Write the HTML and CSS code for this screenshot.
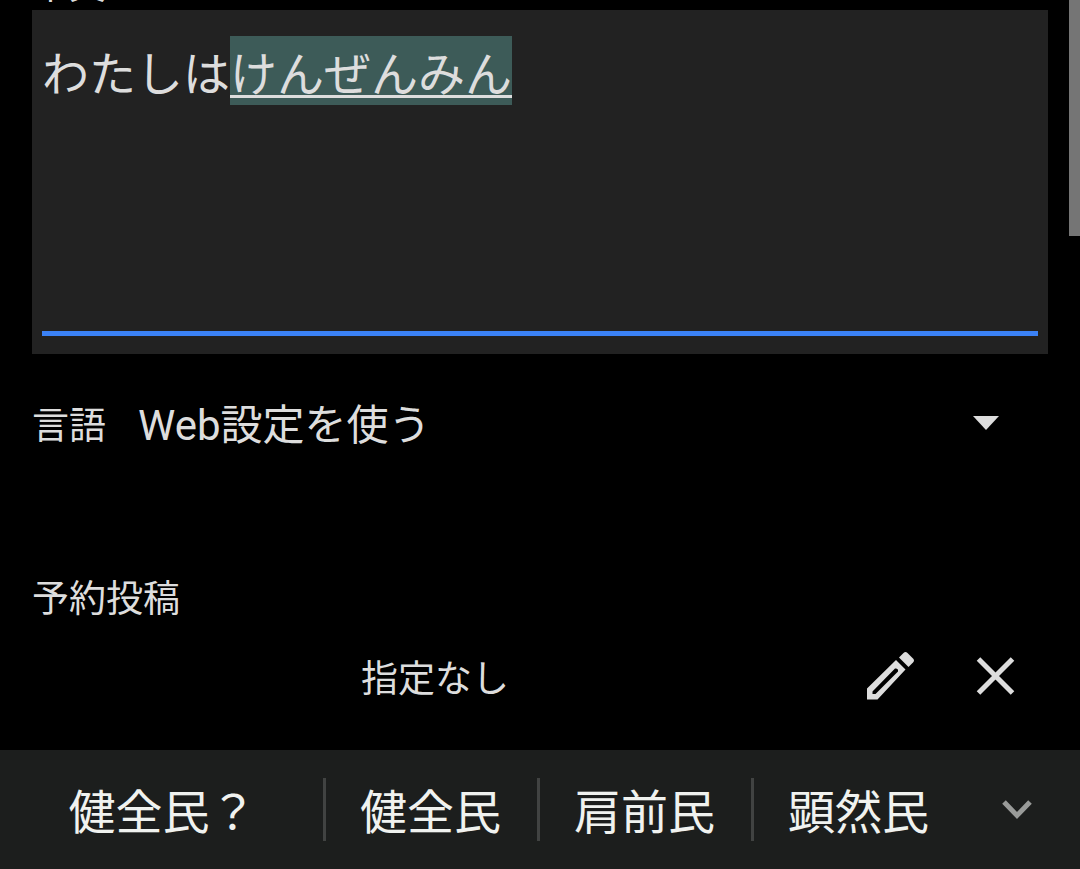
FILE: index.html
```html
<!DOCTYPE html>
<html lang="ja">
<head>
<meta charset="UTF-8">
<meta name="viewport" content="width=device-width, initial-scale=1.0">
<title>投稿</title>
<link rel="stylesheet" href="styles.css">
</head>
<body>
<form class="post-form">
    <label class="field-label" for="content">本文</label>
    <div class="content-box">
        <textarea id="content" class="content-input" name="content" spellcheck="false">わたしはけんぜんみん</textarea>
    </div>

    <div class="language-row">
        <label class="field-label" for="language">言語</label>
        <select id="language" class="language-select" name="language">
            <option>Web設定を使う</option>
        </select>
        <svg class="select-arrow" viewBox="0 0 26 14" aria-hidden="true"><path d="M0 0h26L13 14z"/></svg>
    </div>

    <section class="schedule">
        <h2 class="field-label">予約投稿</h2>
        <div class="schedule-row">
            <span class="schedule-value">指定なし</span>
            <button type="button" class="icon-button" aria-label="編集">
                <svg class="icon" viewBox="0 0 48 48"><path fill-rule="evenodd" d="M0 36.500 29 8 38.500 17.500 10.500 47.500H0zM5.500 39.500v2.500h3L31 19.500Q31.500 16 28 16.500z"/><path d="M32 5.500 36.500 1Q38.500-1 40.500 1L46 6.500Q48 8.500 46 10.500L41.500 15z"/></svg>
            </button>
            <button type="button" class="icon-button" aria-label="削除">
                <svg class="icon icon-close" viewBox="0 0 48 48"><path d="M6.500 7 40.500 41M40.500 7 6.500 41"/></svg>
            </button>
        </div>
    </section>
</form>

<div class="scroll-thumb"></div>

<div class="candidates">
    <button type="button" class="candidate candidate-first">健全民？</button>
    <button type="button" class="candidate">健全民</button>
    <button type="button" class="candidate">肩前民</button>
    <button type="button" class="candidate candidate-last">顕然民</button>
    <button type="button" class="candidate-more" aria-label="もっと見る">
        <svg class="chevron" viewBox="0 0 30 20"><path d="M2 2 15 15.500 28 2"/></svg>
    </button>
</div>

<script>
    // select the part that is still being converted
    const content = document.getElementById("content");
    content.focus();
    content.setSelectionRange(4, 10);
</script>
</body>
</html>
```
FILE: styles.css
```css
* {
    box-sizing: border-box;
}
body {
    display: flex;
    flex-direction: column;
    height: 100vh;
    margin: 0;
    overflow: hidden;
    background-color: #000;
    color: #ddd;
    font-family: "Noto Sans CJK JP", sans-serif;
}
button, select, textarea {
    margin: 0;
    padding: 0;
    border: none;
    border-radius: 0;
    outline: none;
    background: none;
    color: inherit;
    font-family: inherit;
}
.post-form {
    flex: 1;
    margin-top: -44px; /* scrolled down past the first label */
    padding: 0 32px;
}
.field-label {
    display: block;
    margin: 0;
    font-size: 37px;
    font-weight: normal;
    line-height: 54px;
}
.content-box {
    padding: 26px 10px 18px;
    background-color: #222;
}
.content-input {
    display: block;
    width: 100%;
    height: 300px;
    border-bottom: 5px solid #3b82f6;
    font-size: 47px;
    line-height: 69px;
    resize: none;
    caret-color: transparent;
}
.content-input::selection {
    background-color: rgba(62, 92, 89, 0.99);
    color: #ddd;
    text-decoration: underline 3px;
    text-underline-offset: 4px;
}

/* Language */
.language-row {
    position: relative;
    display: flex;
    align-items: center;
    gap: 32px;
    height: 138px;
}
.language-select {
    flex: 1;
    height: 62px;
    padding-top: 4px;
    appearance: none;
    font-family: Roboto, "Noto Sans CJK JP", sans-serif;
    font-size: 42px;
}
.select-arrow {
    position: absolute;
    right: 49px;
    width: 26px;
    height: 14px;
    fill: #ddd;
    pointer-events: none;
}

/* Schedule */
.schedule {
    margin-top: 77px;
}
.schedule-row {
    display: flex;
    align-items: center;
    height: 106px;
}
.schedule-value {
    flex: 1;
    font-size: 37px;
    line-height: 54px;
    text-align: center;
}
.icon-button {
    display: flex;
    align-items: center;
    justify-content: center;
    width: 105px;
    height: 105px;
}
.icon {
    width: 48px;
    height: 48px;
    fill: #ddd;
    overflow: visible;
}
.icon-close {
    fill: none;
    stroke: #ddd;
    stroke-width: 5;
}
.scroll-thumb {
    position: absolute;
    top: 0;
    right: 0;
    width: 11px;
    height: 236px;
    background-color: #757575;
}

/* Candidate bar */
.candidates {
    display: flex;
    align-items: center;
    height: 119px;
    background-color: #1c1e1d;
    color: #f0f2ef;
}
.candidate {
    height: 63px;
    padding: 0 36px 2px 34px;
    border-right: 3px solid #414342;
    font-size: 47px;
    line-height: 61px;
    white-space: nowrap;
}
.candidate-first {
    flex: 1;
    padding: 0 32px 2px 34px;
}
.candidate-last {
    border-right: none;
}
.candidate-more {
    display: flex;
    align-items: center;
    justify-content: center;
    width: 115px;
    height: 119px;
    padding-right: 12px;
}
.chevron {
    width: 30px;
    height: 20px;
    fill: none;
    stroke: #999b99;
    stroke-width: 5;
}
```
